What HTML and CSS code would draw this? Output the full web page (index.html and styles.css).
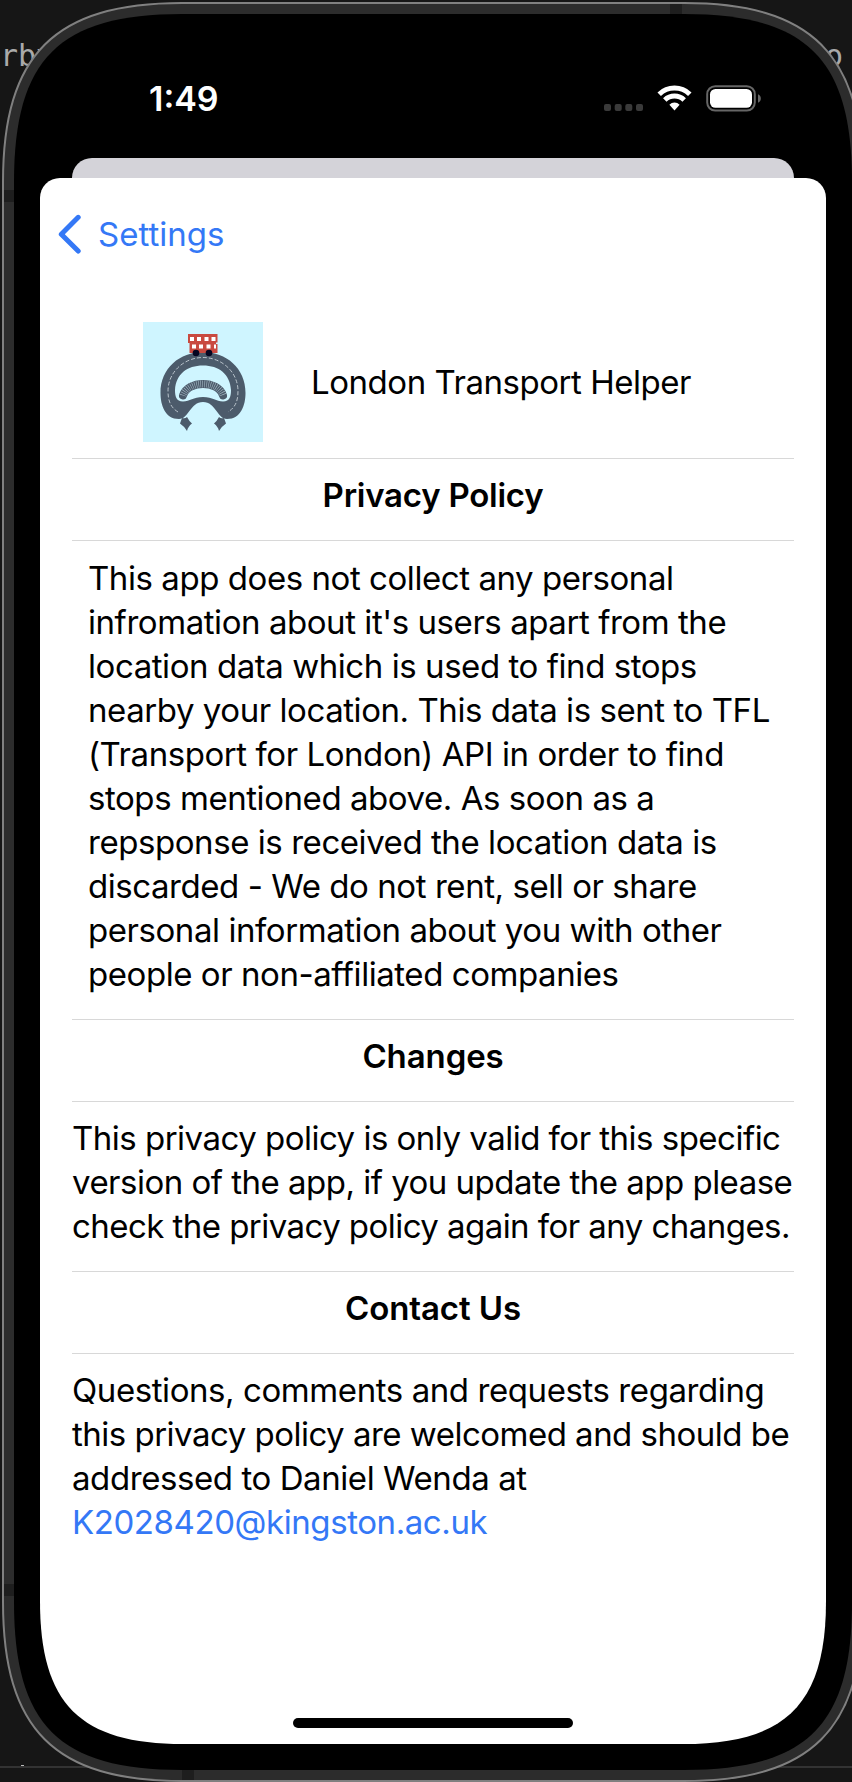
FILE: index.html
```html
<!DOCTYPE html>
<html lang="en">
<head>
<meta charset="utf-8">
<title>Privacy Policy</title>
<link rel="stylesheet" href="styles.css">
</head>
<body>
<div class="desktop">
  <span class="behind behind-left">rby</span>
  <span class="behind behind-right">o</span>
  <span class="behind-line"></span>
  <span class="behind-dot"></span>
  <svg class="frame" width="852" height="1782" viewBox="0 0 852 1782">
    <path d="M3 182C3 54 55 3 182 3H684C811 3 863 54 863 182V1602C863 1730 811 1781 684 1781H182C55 1781 3 1730 3 1602Z" fill="#2c2c2c" stroke="#808080" stroke-width="2"/>
    <path d="M670 4h12v10h-12zM182 1770h12v10h-12zM4 190h10v12H4zM4 1584h10v12H4z" fill="#1e1e1e"/>
    <path d="M14 182C14 59 59 14 182 14H684C807 14 852 59 852 182V1602C852 1725 807 1770 684 1770H182C59 1770 14 1725 14 1602Z" fill="#000"/>
  </svg>
  <div class="screen">
    <header class="status">
      <span class="time">1:49</span>
      <svg class="indicators" width="160" height="28" viewBox="0 0 160 28">
        <g fill="#3a3a3a">
          <rect x="2" y="20" width="7" height="7" rx="2"/><rect x="12.700" y="20" width="7" height="7" rx="2"/><rect x="23.300" y="20" width="7" height="7" rx="2"/><rect x="34" y="20" width="7" height="7" rx="2"/>
        </g>
        <g fill="none" stroke="#fff" stroke-width="5">
          <path d="M57.200 10.200a22 22 0 0 1 30.600 0"/>
          <path d="M62.800 16a14 14 0 0 1 19.400 0"/>
        </g>
        <path d="M67.400 20.700a7.300 7.300 0 0 1 10.200 0L72.500 26.500z" fill="#fff"/>
        <rect x="105.200" y="2.200" width="47.600" height="24.400" rx="8" fill="none" stroke="#666" stroke-width="2"/>
        <rect x="108" y="5" width="42" height="18.800" rx="5.500" fill="#fff"/>
        <path d="M156 10.200v8.500a4.600 4.600 0 0 0 0-8.500z" fill="#666"/>
      </svg>
    </header>
    <div class="under-sheet"></div>
    <main class="sheet">
      <nav class="nav">
        <svg width="24" height="40" viewBox="0 0 24 40"><path d="M21.200 3.300 4.300 20.200l16.900 16.900" fill="none" stroke="#3478f6" stroke-width="5" stroke-linecap="round" stroke-linejoin="round"/></svg>
        <span>Settings</span>
      </nav>
      <section class="brand">
        <svg class="logo" width="120" height="120" viewBox="0 0 120 120">
          <rect width="120" height="120" fill="#cff5ff"/>
          <path d="M36 97C22 97 17.500 83 17.500 71C17.500 46 37 30 60 30S102.500 46 102.500 71C102.500 83 98 97 84 97C74 97 73 80 60 80S46 97 36 97z" fill="#4c5b6b"/>
          <path d="M40 79.500C33 79.500 32 74 32 68C33 52 44 43.500 60 43.500S87 52 88 68C88 74 87 79.500 80 79.500C73 79.500 70 75 60 75S47 79.500 40 79.500z" fill="#cff5ff"/>
          <path d="M35 90C27 85 25 78 25 69A35 33.500 0 0 1 95 69C95 78 93 85 85 90" fill="none" stroke="#b9c3cb" stroke-width="1" stroke-dasharray="4 2"/>
          <path d="M40 73.500C45 58 75 58 80 73.500" fill="none" stroke="#4c5b6b" stroke-width="8" stroke-linecap="round"/>
          <path d="M40 73.500C45 58 75 58 80 73.500" fill="none" stroke="#a5b9c5" stroke-width="7" stroke-dasharray=".6 1.400"/>
          <path d="M37 101.500l2-5.500q3 1 5-1 2 4 5 6.500-4 3-5 7.500-2.500-4.500-7-7.500zM83 101.500l-2-5.500q-3 1-5-1-2 4-5 6.500 4 3 5 7.500 2.500-4.500 7-7.500z" fill="#4c5b6b"/>
          <path d="M45 12h29.500v8.500H73V22h1.500v9H46.500V21H45z" fill="#c94a40"/>
          <path d="M47 15h4v4h-4zM54 15h4v4h-4zM61.500 15h4v4h-4zM68.500 15h4v4h-4zM49 22.500h4v4h-4zM56 22.500h4v4h-4zM63.500 22.500h4v4h-4zM71 22.500h2v4h-2z" fill="#fff"/>
          <circle cx="53" cy="31" r="3.300" fill="#060621"/><circle cx="66" cy="31" r="3.300" fill="#060621"/>
        </svg>
        <span class="app-name">London Transport Helper</span>
      </section>
      <h2>Privacy Policy</h2>
      <p class="policy">
        <span>This app does not collect any personal</span>
        <span>infromation about it's users apart from the</span>
        <span>location data which is used to find stops</span>
        <span>nearby your location. This data is sent to TFL</span>
        <span>(Transport for London) API in order to find</span>
        <span>stops mentioned above. As soon as a</span>
        <span>repsponse is received the location data is</span>
        <span>discarded - We do not rent, sell or share</span>
        <span>personal information about you with other</span>
        <span>people or non-affiliated companies</span>
      </p>
      <h2 class="heading-short">Changes</h2>
      <p class="changes">
        <span>This privacy policy is only valid for this specific</span>
        <span>version of the app, if you update the app please</span>
        <span class="tighter">check the privacy policy again for any changes.</span>
      </p>
      <h2 class="heading-short">Contact Us</h2>
      <p class="contact">
        <span>Questions, comments and requests regarding</span>
        <span class="tight">this privacy policy are welcomed and should be</span>
        <span>addressed to Daniel Wenda at</span>
        <a>K2028420@kingston.ac.uk</a>
      </p>
      <span class="home"></span>
    </main>
  </div>
</div>
</body>
</html>
```
FILE: styles.css
```css
* { box-sizing: border-box; }
body { margin: 0; }
.desktop {
  position: relative;
  width: 852px;
  height: 1782px;
  overflow: hidden;
  padding: 40px 0 0 40px;
  background: #161616;
  font-family: Inter, "Liberation Sans", sans-serif;
}
.behind {
  position: absolute;
  top: 38px;
  font: 30px/36px "DejaVu Sans Mono", monospace;
  color: #aaa;
}
.behind-left { left: 0; }
.behind-right { left: 825px; }
.behind-line { position: absolute; left: 0; right: 0; top: 1766px; height: 2px; background: #333; }
.behind-dot { position: absolute; left: 21px; top: 1765px; width: 3px; height: 1px; background: #bbb; }
.frame { position: absolute; left: 0; top: 0; }
.screen {
  position: relative;
  width: 786px;
  height: 1704px;
  clip-path: path("M0 0H786V1561C786 1664 746 1704 643 1704H143C40 1704 0 1664 0 1561Z");
}
.status {
  display: flex;
  justify-content: space-between;
  height: 118px;
  padding: 43px 64px 0 109px;
}
.time { font-weight: 600; font-size: 34px; line-height: 31px; height: 32px; color: #fff; }
.indicators { margin-top: 1px; }
.under-sheet {
  height: 40px;
  margin: 0 32px;
  border-radius: 20px 20px 0 0;
  background: #d4d3d9;
}
.sheet {
  display: flex;
  flex-direction: column;
  height: 1566px;
  margin-top: -20px;
  padding: 0 32px;
  border-radius: 20px 20px 0 0;
  background: #fff;
  position: relative;
  font-size: 33px;
  line-height: 44px;
  color: #000;
}
.nav {
  display: flex;
  align-items: center;
  gap: 17px;
  height: 40px;
  margin: 36px 0 0 -15px;
  color: #3478f6;
}
.brand {
  display: flex;
  align-items: center;
  gap: 48px;
  margin: 68px 0 16px;
  padding-left: 71px;
}
.app-name { letter-spacing: -0.46px; }
.logo { display: block; }
h2 {
  height: 83px;
  margin: 0;
  padding-top: 14px;
  border-top: 1px solid #d8d8d8;
  border-bottom: 1px solid #d8d8d8;
  font-size: 33px;
  font-weight: 600;
  line-height: 44px;
  letter-spacing: -0.24px;
  text-align: center;
}
.heading-short { letter-spacing: -0.1px; }
p { margin: 0; padding: 14px 0; }
.policy { padding-top: 15px; padding-left: 16px; height: 478px; letter-spacing: -0.44px; }
.changes { height: 169px; letter-spacing: -0.51px; }
.contact { letter-spacing: -0.42px; }
.tight { letter-spacing: -0.51px; }
.tighter { letter-spacing: -0.55px; }
p span, p a { display: block; width: max-content; white-space: nowrap; }
p a { color: #3478f6; }
.home {
  position: absolute;
  left: 253px;
  bottom: 16px;
  width: 280px;
  height: 10px;
  border-radius: 5px;
  background: #000;
}
```
